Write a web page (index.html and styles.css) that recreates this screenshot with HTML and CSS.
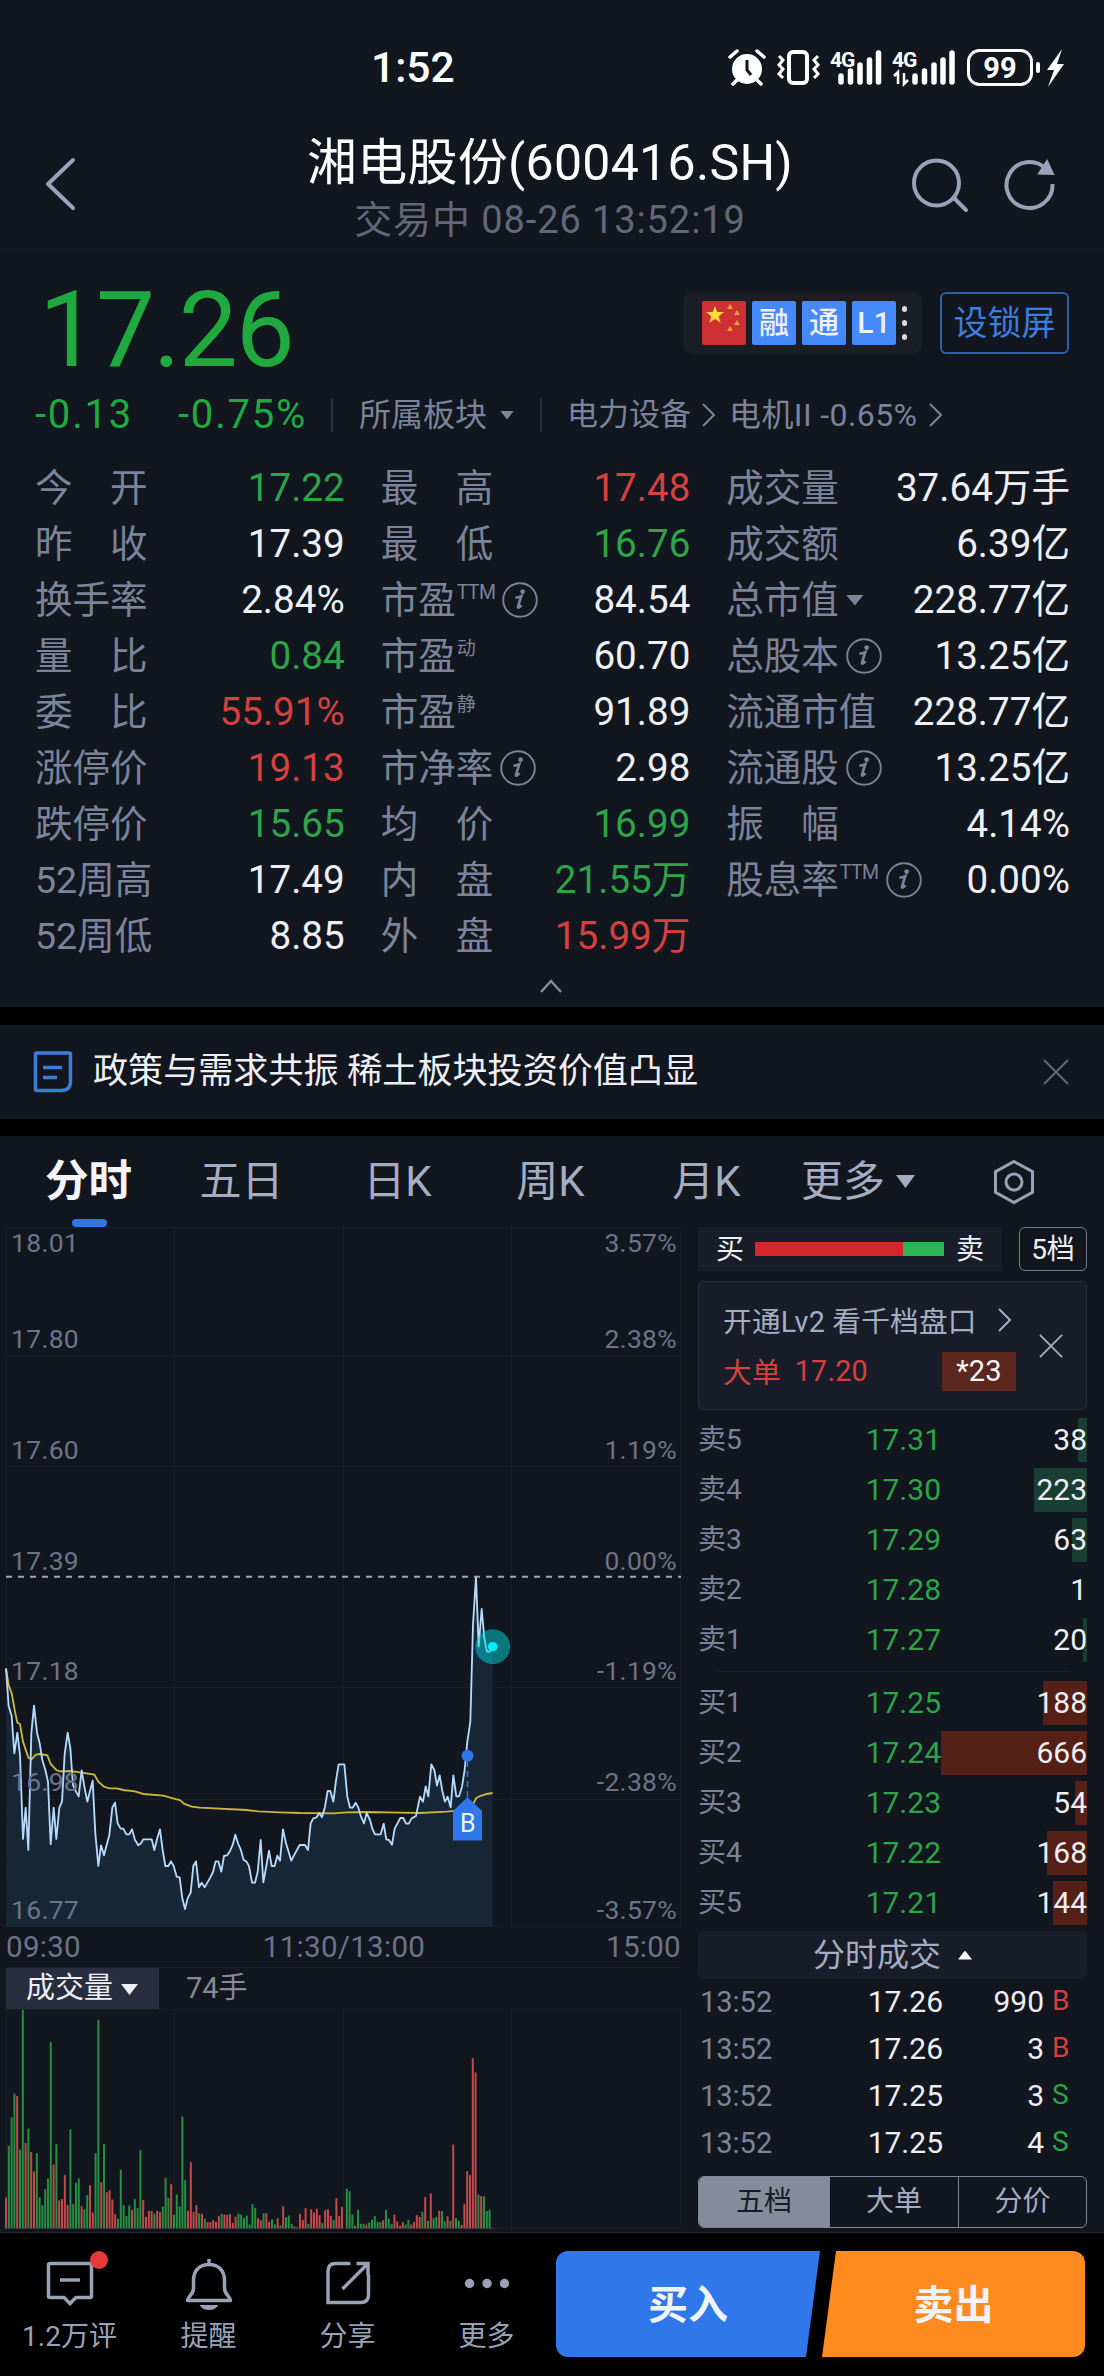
FILE: index.html
```html
<!DOCTYPE html>
<html lang="zh-CN">
<head>
    <meta charset="UTF-8">
    <meta name="viewport" content="width=device-width, initial-scale=1.0">
    <title>湘电股份(600416.SH)</title>
    <link rel="stylesheet" href="styles.css">
</head>
<body>
    <svg class="defs" width="0" height="0">
        <symbol id="info" viewBox="0 0 36 36">
            <circle cx="18" cy="18" r="16.8" fill="none" stroke="currentColor" stroke-width="1.9"/>
            <circle cx="20.6" cy="9.7" r="2.4" fill="currentColor"/>
            <path d="M13.500 15.800c2.200-.3 4-.8 5.800-1.600l-3.300 10.400c-.4 1.700.9 1.300 3.600-1.400" fill="none" stroke="currentColor" stroke-width="2.600"/>
        </symbol>
        <symbol id="chevron" viewBox="0 0 13 24">
            <path d="M1 1l11 11L1 23" fill="none" stroke="currentColor" stroke-width="2"/>
        </symbol>
        <symbol id="close" viewBox="0 0 26 26">
            <path d="M1 1l24 24M25 1L1 25" fill="none" stroke="currentColor" stroke-width="2"/>
        </symbol>
    </svg>

    <!-- Status bar -->
    <div class="status-bar">
        <div class="clock">1:52</div>
        <svg class="status-icons" width="340" height="60" viewBox="726 38 340 60" fill="#fff">
            <circle cx="746" cy="69" r="15"/>
            <path d="M729 57l7-6M763 57l-7-6M736 80l-4 4M756 80l4 4" stroke="#fff" stroke-width="3.500" stroke-linecap="round"/>
            <path d="M746 60v10l4 5" fill="none" stroke="#12161f" stroke-width="3"/>
            <rect x="788" y="52" width="18" height="31" rx="4" fill="none" stroke="#fff" stroke-width="4"/>
            <path d="M778 56l4 4-4 5 4 4-4 5 4 4M817 56l-4 4 4 5-4 4 4 5-4 4" fill="none" stroke="#fff" stroke-width="3"/>
            <text x="829" y="67" class="net">4G</text>
            <path d="M840 76v6M849.500 71v11M859 65v17M868.500 60v22M877.500 53v29" stroke="#fff" stroke-width="5.500" stroke-linecap="round"/>
            <text x="891" y="67" class="net">4G</text>
            <path d="M897 84v-12l-4 4M903 73v11l4-4" fill="none" stroke="#fff" stroke-width="2.500"/>
            <path d="M914 76v6M923.500 71v11M933 65v17M942 60v22M951 53v29" stroke="#fff" stroke-width="5.500" stroke-linecap="round"/>
            <rect x="967.500" y="50.500" width="63" height="34" rx="11" fill="none" stroke="#fff" stroke-width="3"/>
            <text x="999" y="78" class="battery">99</text>
            <rect x="1035" y="62" width="4" height="11" rx="2"/>
            <path d="M1061 49l-15 21h7l-6 17 16-23h-7z"/>
        </svg>
    </div>

    <!-- Title -->
    <header class="header">
        <svg class="back" width="32" height="54" viewBox="0 0 32 54">
            <path d="M29 3L4 27l25 24" fill="none" stroke="#99a2b8" stroke-width="4" stroke-linecap="round" stroke-linejoin="round"/>
        </svg>
        <div class="title">
            <h1>湘电股份(600416.SH)</h1>
            <p>交易中 08-26 13:52:19</p>
        </div>
        <svg width="146" height="56" viewBox="909 157 146 56" fill="none" stroke="#99a2b8" stroke-width="4">
            <circle cx="935.500" cy="183" r="22.500"/>
            <path d="M953 198l12 12" stroke-linecap="round"/>
            <path d="M1045 169a23 23 0 1 0 6.500 15"/>
            <path d="M1046 161l6 13-14-.5z" fill="#99a2b8" stroke-width="2"/>
        </svg>
    </header>

    <!-- Quote -->
    <section class="quote">
        <div class="price-row">
            <div class="price">17.26</div>
            <div class="badges">
                <svg width="44" height="44" viewBox="0 0 44 44">
                    <rect width="44" height="44" rx="2" fill="#cf3034"/>
                    <path d="M13 5l2.300 6H22l-5.300 4.200 2 6.600L13 18l-5.700 3.800 2-6.600L4 11h6.700z" fill="#fddb35"/>
                    <path d="M28 3l3 5h-6zM35 9l3 5h-6zM35 19l3 5h-6zM28 25l3 5h-6z" fill="#f0a23a"/>
                </svg>
                <span class="badge">融</span>
                <span class="badge">通</span>
                <span class="badge">L1</span>
                <span class="dots"><i></i><i></i><i></i></span>
            </div>
            <button class="lock-btn">设锁屏</button>
        </div>
        <div class="change-row">
            <span class="change green">-0.13</span>
            <span class="change percent green">-0.75%</span>
            <span class="bar"></span>
            <span class="board">所属板块</span>
            <span class="tri"></span>
            <span class="bar second"></span>
            <span class="industry">电力设备</span>
            <svg class="arrow" width="13" height="24"><use href="#chevron"/></svg>
            <span class="machine">电机II -0.65%</span>
            <svg class="arrow" width="13" height="24"><use href="#chevron"/></svg>
        </div>

        <div class="stats">
            <dl>
                <div><dt>今　开</dt><dd class="green">17.22</dd></div>
                <div><dt>昨　收</dt><dd>17.39</dd></div>
                <div><dt>换手率</dt><dd>2.84%</dd></div>
                <div><dt>量　比</dt><dd class="green">0.84</dd></div>
                <div><dt>委　比</dt><dd class="red">55.91%</dd></div>
                <div><dt>涨停价</dt><dd class="red">19.13</dd></div>
                <div><dt>跌停价</dt><dd class="green">15.65</dd></div>
                <div><dt>52周高</dt><dd>17.49</dd></div>
                <div><dt>52周低</dt><dd>8.85</dd></div>
            </dl>
            <dl>
                <div><dt>最　高</dt><dd class="red">17.48</dd></div>
                <div><dt>最　低</dt><dd class="green">16.76</dd></div>
                <div><dt>市盈<sup class="ttm">TTM</sup><svg class="info"><use href="#info"/></svg></dt><dd>84.54</dd></div>
                <div><dt>市盈<sup>动</sup></dt><dd>60.70</dd></div>
                <div><dt>市盈<sup>静</sup></dt><dd>91.89</dd></div>
                <div><dt>市净率<svg class="info"><use href="#info"/></svg></dt><dd>2.98</dd></div>
                <div><dt>均　价</dt><dd class="green">16.99</dd></div>
                <div><dt>内　盘</dt><dd class="green">21.55万</dd></div>
                <div><dt>外　盘</dt><dd class="red">15.99万</dd></div>
            </dl>
            <dl>
                <div><dt>成交量</dt><dd>37.64万手</dd></div>
                <div><dt>成交额</dt><dd>6.39亿</dd></div>
                <div><dt>总市值<span class="tri big"></span></dt><dd>228.77亿</dd></div>
                <div><dt>总股本<svg class="info"><use href="#info"/></svg></dt><dd>13.25亿</dd></div>
                <div><dt>流通市值</dt><dd>228.77亿</dd></div>
                <div><dt>流通股<svg class="info"><use href="#info"/></svg></dt><dd>13.25亿</dd></div>
                <div><dt>振　幅</dt><dd>4.14%</dd></div>
                <div><dt>股息率<sup class="ttm">TTM</sup><svg class="info"><use href="#info"/></svg></dt><dd>0.00%</dd></div>
            </dl>
        </div>
        <svg class="collapse" width="24" height="16" viewBox="0 0 24 16">
            <path d="M2 14L12 3l10 11" fill="none" stroke="#858c9d" stroke-width="2.500"/>
        </svg>
    </section>

    <!-- News -->
    <section class="news">
        <svg width="40" height="44" viewBox="0 0 40 44" fill="none" stroke="#3f7ddb" stroke-width="3.500">
            <path d="M4 3h32a1.500 1.500 0 0 1 1.500 1.500V31c0 6-3 9.500-9 9.500H4A1.500 1.500 0 0 1 2.500 39V4.500A1.500 1.500 0 0 1 4 3z"/>
            <path d="M10 17.500h19M10 27.500h14"/>
        </svg>
        <p>政策与需求共振 稀土板块投资价值凸显</p>
        <svg class="close" width="26" height="26"><use href="#close"/></svg>
    </section>

    <!-- Chart area -->
    <section class="market">
        <nav class="tabs">
            <a class="active">分时</a>
            <a>五日</a>
            <a>日K</a>
            <a>周K</a>
            <a>月K</a>
            <a>更多<span class="tri big"></span></a>
            <svg width="44" height="46" viewBox="0 0 44 46" fill="none" stroke="#99a2b8" stroke-width="3">
                <path d="M22 2.500l18.500 10.200v20.600L22 43.500 3.500 33.300V12.700z"/>
                <circle cx="22" cy="23" r="8"/>
            </svg>
        </nav>

        <div class="columns">
            <div class="chart">
                <svg width="690" height="738" viewBox="0 0 690 738">
                    <path class="grid" d="M6 .5h675M6 128.500h675M6 239.500h675M6 460.500h675M6 572.500h675M6 699.500h675M6.500 0v700M174.500 0v700M343.500 0v700M511.500 0v700M680.500 0v700"/>
                    <g transform="translate(0 333) scale(.33333)">
                        <path id="area" fill="#182736"/>
                        <path id="average" class="average"/>
                        <path id="line" class="line"/>
                    </g>
                    <path class="base" d="M6 349.700h675"/>
                    <g class="axis">
                        <text x="11" y="25">18.01</text>
                        <text x="11" y="120.500">17.80</text>
                        <text x="11" y="231.500">17.60</text>
                        <text x="11" y="342.500">17.39</text>
                        <text x="11" y="453">17.18</text>
                        <text x="11" y="564">16.98</text>
                        <text x="11" y="692">16.77</text>
                    </g>
                    <g class="axis end">
                        <text x="677" y="25">3.57%</text>
                        <text x="677" y="120.500">2.38%</text>
                        <text x="677" y="231.500">1.19%</text>
                        <text x="677" y="342.500">0.00%</text>
                        <text x="677" y="453">-1.19%</text>
                        <text x="677" y="564">-2.38%</text>
                        <text x="677" y="692">-3.57%</text>
                    </g>
                    <circle cx="492.700" cy="419.700" r="17.500" fill="#00d5dc" fill-opacity=".5"/>
                    <circle cx="492.700" cy="419.700" r="4.800" fill="#09eaff"/>
                    <path d="M467.500 534v36" stroke="#2f77ea" stroke-width="1.500" stroke-dasharray="6 4"/>
                    <circle cx="467.500" cy="528.700" r="6" fill="#2f77ea"/>
                    <path d="M467.500 570l14.500 14v29.500h-29V584z" fill="#2f77ea"/>
                    <text x="467.800" y="605" class="mark">B</text>
                    <g class="time">
                        <text x="6" y="729.500">09:30</text>
                        <text x="344" y="729.500" text-anchor="middle">11:30/13:00</text>
                        <text x="681" y="729.500" text-anchor="end">15:00</text>
                    </g>
                </svg>
                <div class="volume-head">
                    <span class="select">成交量<span class="tri"></span></span>
                    <span class="hands">74手</span>
                </div>
                <svg width="690" height="220" viewBox="0 0 690 220">
                    <path class="grid" d="M6 .5h675M6 219.500h675M6.500 0v220M174.500 0v220M343.500 0v220M511.500 0v220M680.500 0v220"/>
                    <g id="volume"></g>
                </svg>
            </div>

            <div class="depth">
                <div class="ratio-row">
                    <div class="ratio">买<span class="ratio-bar"><i></i></span>卖</div>
                    <span class="level">5档</span>
                </div>
                <div class="lv2">
                    <div class="lv2-body">
                        <p>开通Lv2 看千档盘口<svg width="13" height="24"><use href="#chevron"/></svg></p>
                        <p class="red"><span>大单</span><span class="big-price">17.20</span><b>*23</b></p>
                    </div>
                    <svg width="24" height="24"><use href="#close" width="24" height="24"/></svg>
                </div>
                <ul class="orders sell">
                    <li><span>卖5</span><em>17.31</em><b><i style="width: 9px"></i>38</b></li>
                    <li><span>卖4</span><em>17.30</em><b><i style="width: 53px"></i>223</b></li>
                    <li><span>卖3</span><em>17.29</em><b><i style="width: 15px"></i>63</b></li>
                    <li><span>卖2</span><em>17.28</em><b>1</b></li>
                    <li><span>卖1</span><em>17.27</em><b><i style="width: 4px"></i>20</b></li>
                </ul>
                <hr>
                <ul class="orders buy">
                    <li><span>买1</span><em>17.25</em><b><i style="width: 44px"></i>188</b></li>
                    <li><span>买2</span><em>17.24</em><b><i style="width: 146px"></i>666</b></li>
                    <li><span>买3</span><em>17.23</em><b><i style="width: 12px"></i>54</b></li>
                    <li><span>买4</span><em>17.22</em><b><i style="width: 40px"></i>168</b></li>
                    <li><span>买5</span><em>17.21</em><b><i style="width: 34px"></i>144</b></li>
                </ul>
                <div class="deals-head">分时成交<span class="tri up"></span></div>
                <ul class="deals">
                    <li><span>13:52</span><em>17.26</em><b>990</b><i class="red">B</i></li>
                    <li><span>13:52</span><em>17.26</em><b>3</b><i class="red">B</i></li>
                    <li><span>13:52</span><em>17.25</em><b>3</b><i class="green">S</i></li>
                    <li><span>13:52</span><em>17.25</em><b>4</b><i class="green">S</i></li>
                </ul>
                <div class="segments">
                    <span class="on">五档</span>
                    <span>大单</span>
                    <span>分价</span>
                </div>
            </div>
        </div>
    </section>

    <!-- Bottom bar -->
    <footer class="toolbar">
        <a>
            <svg width="62" height="60" viewBox="39 2250 62 60" fill="none" stroke="#99a2b5" stroke-width="3.500">
                <path d="M50 2263.500h40a1.500 1.500 0 0 1 1.500 1.500v31a1.500 1.500 0 0 1-1.500 1.500H76l-6 6-6-6H50a1.500 1.500 0 0 1-1.500-1.500v-31a1.500 1.500 0 0 1 1.500-1.500z"/>
                <path d="M60 2280h20"/>
                <circle cx="99" cy="2260" r="9" fill="#e63a38" stroke="none"/>
            </svg>
            <span>1.2万评</span>
        </a>
        <a>
            <svg width="62" height="60" viewBox="177.500 2250 62 60" fill="none" stroke="#99a2b5" stroke-width="3.500" stroke-linejoin="round">
                <path d="M208.500 2259v6M187 2300.500c0-4 6-6 6-12v-8c0-10 6-16 15.500-16s15.500 6 15.500 16v8c0 6 6 8 6 12z"/>
                <path d="M199 2305h19q-3 5-9.500 5t-9.500-5z" fill="#99a2b5" stroke="none"/>
            </svg>
            <span>提醒</span>
        </a>
        <a>
            <svg width="62" height="60" viewBox="316.500 2250 62 60" fill="none" stroke="#99a2b5" stroke-width="3.500">
                <path d="M350 2263.500h-15q-7.500 0-7.500 8v31h33q7.500 0 7.500-8v-20M356 2263.500h11.500v11.500M367 2264l-25 25"/>
            </svg>
            <span>分享</span>
        </a>
        <a>
            <svg width="62" height="60" viewBox="455 2250 62 60" fill="#99a2b5">
                <circle cx="468.500" cy="2283.500" r="4.700"/><circle cx="486" cy="2283.500" r="4.700"/><circle cx="503.500" cy="2283.500" r="4.700"/>
            </svg>
            <span>更多</span>
        </a>
        <div class="trade">
            <button class="buy-btn">买入</button>
            <button class="sell-btn">卖出</button>
        </div>
    </footer>

    <script src="chart.js"></script>
</body>
</html>
```

FILE: styles.css
```css
* {
    margin: 0;
    padding: 0;
    box-sizing: border-box;
}

body {
    width: 1104px;
    height: 2376px;
    overflow: hidden;
    background-color: #000;
    color: #eef0f5;
    font-family: Roboto, "Noto Sans CJK SC", sans-serif;
}

svg {
    display: block;
    flex-shrink: 0;
}

.defs {
    position: absolute;
}

ul {
    list-style: none;
}

em, i {
    font-style: normal;
}

b {
    font-weight: 400;
}

button {
    font-family: inherit;
    border: none;
}

.green {
    color: #2ea449;
}

.red {
    color: #d5413e;
}

/* Triangles */
.tri {
    display: inline-block;
    width: 14px;
    height: 9px;
    background-color: currentColor;
    clip-path: polygon(0 0, 100% 0, 50% 100%);
}

.tri.big {
    width: 20px;
    height: 13px;
}

.tri.up {
    clip-path: polygon(50% 0, 100% 100%, 0 100%);
}

/* Status bar */
.status-bar {
    display: flex;
    height: 120px;
    padding: 38px 37px 0 371px;
    background-color: #12161f;
    justify-content: space-between;
}

.clock {
    font-size: 42.5px;
    font-weight: 500;
    line-height: 60px;
    color: #fff;
}

.net {
    font-size: 21px;
    font-weight: 700;
    letter-spacing: -1px;
}

.battery {
    font-size: 29px;
    font-weight: 700;
    text-anchor: middle;
}

/* Header */
.header {
    display: flex;
    height: 130px;
    padding: 0 48px 0 44px;
    background-color: #12161f;
    border-bottom: 1px solid #1b1f28;
    justify-content: space-between;
}

.header > svg {
    margin-top: 37px;
}

.back {
    margin-right: 114px;
}

.title {
    text-align: center;
    padding-top: 13px;
}

.title h1 {
    font-size: 50px;
    font-weight: 400;
    line-height: 60px;
    letter-spacing: .3px;
    color: #fff;
}

.title p {
    font-size: 38px;
    line-height: 54px;
    letter-spacing: .9px;
    color: #62687a;
}

/* Quote */
.quote {
    height: 757px;
    background-color: #12161f;
}

.price-row {
    display: flex;
    height: 125px;
    padding: 42px 35px 0 39px;
}

.price {
    flex: 1;
    font-size: 105px;
    line-height: 77px;
    letter-spacing: -2px;
    color: #1fa93f;
}

.badges {
    display: flex;
    width: 239px;
    height: 62px;
    padding: 0 0 0 19px;
    margin-right: 18px;
    gap: 6px;
    align-items: center;
    background-color: #1b1e25;
    border-radius: 10px;
}

.badge {
    width: 44px;
    height: 44px;
    border-radius: 2px;
    background-color: #4689fb;
    font-size: 30px;
    font-weight: 500;
    line-height: 43px;
    text-align: center;
}

.dots {
    display: flex;
    flex-direction: column;
    gap: 8px;
}

.dots i {
    width: 5px;
    height: 6px;
    border-radius: 3px;
    background-color: #d8dadf;
}

.lock-btn {
    width: 129px;
    height: 62px;
    border: 2px solid #305fa8;
    border-radius: 6px;
    background: none;
    font-size: 34px;
    line-height: 56px;
    color: #3d7ddd;
}

.change-row {
    display: flex;
    height: 80px;
    padding-left: 35px;
    align-items: center;
    font-size: 32px;
    line-height: 78px;
    white-space: nowrap;
    color: #7b849a;
}

.change {
    width: 143px;
    font-size: 40px;
    line-height: 80px;
    letter-spacing: 1.8px;
    color: #1fa93f;
}

.percent {
    width: 153px;
}

.bar {
    width: 2px;
    height: 34px;
    background-color: #2a2f3a;
}

.board {
    margin-left: 26px;
}

.change-row .tri {
    margin-left: 13px;
}

.second {
    margin: 0 25px 0 26px;
}

.industry {
    width: 124px;
    font-size: 31px;
}

.machine {
    width: 191px;
    margin-left: 14px;
    letter-spacing: .4px;
}

.machine + .arrow {
    margin-left: 9px;
}

.industry + .arrow {
    margin-left: 11px;
}

.stats {
    display: flex;
    padding: 5px 34px 0 35px;
    gap: 36px;
}

.stats dl {
    width: 310px;
}

.stats dl:last-child {
    width: 344px;
}

.stats dl > div {
    display: flex;
    height: 56px;
    align-items: center;
    justify-content: space-between;
    white-space: nowrap;
}

dt {
    display: flex;
    align-items: center;
    font-size: 37.5px;
    line-height: 56px;
    color: #7b849a;
}

dd {
    font-size: 38.6px;
    line-height: 56px;
}

sup {
    font-size: 19px;
    line-height: 20px;
    margin: 0 0 14px 1px;
}

.ttm {
    font-size: 19.5px;
    letter-spacing: -.6px;
}

.info {
    width: 36px;
    height: 36px;
    margin-left: 7px;
}

dt .tri.big {
    width: 18px;
    height: 11px;
    margin-left: 7px;
}

.collapse {
    margin: 14px auto 0 539px;
}

/* News */
.news {
    display: flex;
    height: 94px;
    margin: 18px 0 17px;
    padding: 0 35px 0 33px;
    align-items: center;
    background-color: #12161f;
}

.news p {
    flex: 1;
    margin-left: 20px;
    font-size: 35.1px;
    line-height: 94px;
    padding-bottom: 2px;
}

.close {
    color: #5d657a;
}

/* Tabs */
.market {
    height: 1097px;
    background-color: #12161f;
    border-bottom: 1px solid #242832;
}

.tabs {
    display: grid;
    grid-template-columns: 177px 129px 183px 123px 189px 114px 123px;
    height: 91px;
    align-items: center;
    font-size: 42px;
    color: #a5adc2;
}

.tabs a {
    display: flex;
    position: relative;
    height: 91px;
    line-height: 92px;
    align-items: center;
    justify-content: center;
    white-space: nowrap;
}

.tabs .active {
    font-size: 43.5px;
    font-weight: 700;
    color: #f3f5f9;
}

.tabs .active::after {
    content: "";
    position: absolute;
    left: 72px;
    bottom: 0;
    width: 35px;
    height: 8px;
    border-radius: 4px;
    background-color: #3277e6;
}

.tabs .tri {
    margin-left: 11px;
}

.tabs svg {
    margin-left: 77px;
}

.columns {
    display: flex;
    gap: 8px;
}

/* Chart */
.grid {
    fill: none;
    stroke: #1a1e27;
    stroke-width: 1;
}

.line {
    fill: none;
    stroke: #b5dafc;
    stroke-width: 5.5;
    stroke-linejoin: round;
}

.average {
    fill: none;
    stroke: #c9b63c;
    stroke-width: 5.5;
}

.base {
    stroke: #a2a6b4;
    stroke-width: 2;
    stroke-dasharray: 6 6;
}

.axis {
    font-size: 26.5px;
    letter-spacing: .3px;
    fill: #6d748a;
}

.end {
    text-anchor: end;
}

.mark {
    font-size: 25px;
    fill: #f0f5ff;
    text-anchor: middle;
}

.time {
    font-size: 29.5px;
    letter-spacing: .3px;
    fill: #6d748a;
}

.volume-head {
    display: flex;
    height: 42px;
    width: 675px;
    margin: 2px 0 0 6px;
    border-top: 1px solid #1a1e27;
    font-size: 29px;
    line-height: 41px;
}

.select {
    width: 153px;
    padding-left: 20px;
    background-color: #282e40;
}

.select .tri {
    width: 17px;
    height: 11px;
    margin: 0 0 3px 8px;
}

.hands {
    margin-left: 27px;
    color: #868a94;
}

/* Depth */
.depth {
    width: 389px;
}

.ratio-row {
    display: flex;
    justify-content: space-between;
    font-size: 28px;
    line-height: 43px;
}

.ratio {
    display: flex;
    width: 304px;
    height: 44px;
    padding-left: 18px;
    align-items: center;
    background-color: #181d29;
}

.ratio-bar {
    width: 189px;
    height: 14px;
    margin: 0 12px 0 11px;
    background-color: #2eb656;
}

.ratio-bar i {
    display: block;
    width: 148px;
    height: 14px;
    background-color: #d42727;
}

.level {
    width: 68px;
    height: 44px;
    border: 1px solid #737b8e;
    border-radius: 6px;
    text-align: center;
}

.lv2 {
    display: flex;
    height: 129px;
    margin: 10px 0 8px;
    padding: 12px 23px 0 24px;
    border: 1px solid #282e3e;
    border-radius: 5px;
    background-color: #181d29;
    color: #a5adc2;
}

.lv2-body {
    width: 293px;
    margin-right: 23px;
}

.lv2 > svg {
    margin-top: 40px;
}

.lv2 p {
    display: flex;
    height: 51px;
    align-items: center;
    font-size: 28.7px;
    letter-spacing: .2px;
    white-space: nowrap;
}

.lv2 p svg {
    margin-left: 21px;
}

.lv2 .red {
    color: #d5413e;
}

.big-price {
    margin-left: 14px;
}

.lv2 b {
    width: 74px;
    height: 39px;
    margin: 2px 0 0 auto;
    background-color: #5b271f;
    font-size: 29px;
    line-height: 39px;
    text-align: center;
    color: #f3f5f9;
}

.orders li {
    display: flex;
    height: 44px;
    margin-bottom: 6px;
    line-height: 44px;
    font-size: 30px;
}

.orders span {
    width: 122px;
    font-size: 28px;
    color: #7b849a;
}

.orders em {
    width: 121px;
    text-align: right;
    color: #2ea449;
}

.orders b {
    position: relative;
    z-index: 0;
    flex: 1;
    text-align: right;
}

.orders b i {
    position: absolute;
    z-index: -1;
    top: 0;
    right: 0;
    height: 44px;
}

.sell i {
    background-color: #193f34;
}

.buy i {
    background-color: #552117;
}

hr {
    height: 1px;
    margin: 9px 18px 9px;
    border: none;
    background-color: #1d212b;
}

.deals-head {
    display: flex;
    height: 48px;
    align-items: center;
    justify-content: center;
    gap: 17px;
    border-radius: 5px;
    background-color: #181d29;
    font-size: 32px;
    line-height: 46px;
    color: #a5adc2;
}

.deals-head .tri {
    color: #fff;
}

.deals li {
    display: flex;
    height: 47px;
    line-height: 46px;
    font-size: 30px;
}

.deals span {
    width: 123px;
    padding-left: 2px;
    font-size: 29px;
    color: #7b849a;
}

.deals em {
    width: 122px;
    text-align: right;
}

.deals b {
    width: 101px;
    text-align: right;
}

.deals i {
    margin-left: 8px;
    font-size: 28px;
    line-height: 43px;
}

.segments {
    display: grid;
    grid-template-columns: 130px 129px 1fr;
    height: 52px;
    margin-top: 9px;
    border: 1px solid #7f8698;
    border-radius: 6px;
    overflow: hidden;
    font-size: 28px;
    line-height: 50px;
    text-align: center;
    color: #a5adc2;
}

.segments span + span {
    border-left: 1px solid #7f8698;
}

.segments .on {
    background-color: #868c9c;
    color: #181c26;
}

/* Bottom bar */
.toolbar {
    display: flex;
    padding-top: 17px;
}

.toolbar a {
    display: flex;
    width: 139px;
    flex-direction: column;
    align-items: center;
    font-size: 28px;
    line-height: 53px;
    color: #99a2b5;
    white-space: nowrap;
}

.toolbar a svg {
    overflow: visible;
}

.trade {
    display: flex;
    margin-top: 1px;
}

.trade button {
    height: 106px;
    padding-bottom: 5px;
    font-size: 40px;
    font-weight: 700;
    color: #f0f3fa;
}

.buy-btn {
    width: 264px;
    border-radius: 12px 0 0 12px;
    background-color: #3078ea;
    clip-path: polygon(0 0, 100% 0, 250px 100%, 0 100%);
}

.sell-btn {
    width: 263px;
    margin-left: 2px;
    border-radius: 0 12px 12px 0;
    background-color: #ff8a1f;
    clip-path: polygon(14px 0, 100% 0, 100% 100%, 0 100%);
}
```

FILE: chart.js
```js
// Intraday price, x y pairs
const price = '18,325 26,438 35,468 43,580 52,518 60,585 69,837 77,743 85,870 94,520 102,437 111,518 119,550 127,600 136,630 144,665 152,853 161,743 169,837 178,743 186,725 194,582 203,518 211,565 219,675 228,695 236,709 245,631 253,680 262,725 270,693 278,662 286,820 295,918 303,856 312,886 320,855 328,825 337,743 345,728 353,790 362,806 370,806 379,823 388,823 396,808 405,840 415,856 423,850 430,838 455,838 463,870 471,838 480,808 488,870 496,918 505,918 513,904 521,918 530,950 539,952 547,1015 555,1047 563,1015 572,998 580,918 588,904 597,982 605,968 614,982 622,968 631,952 639,936 647,904 655,904 664,935 672,888 681,886 689,875 698,855 706,824 714,850 722,868 731,900 739,904 747,918 756,968 765,968 773,936 782,840 790,967 799,918 807,872 815,918 824,918 832,887 840,902 849,808 858,850 874,902 882,886 899,855 915,855 924,870 932,790 940,775 950,772 958,759 966,772 975,740 983,693 991,693 1000,725 1008,662 1016,613 1033,613 1042,710 1050,743 1058,743 1067,728 1075,743 1083,770 1092,790 1100,759 1110,780 1117,806 1125,823 1142,823 1151,791 1159,838 1167,840 1176,854 1184,806 1201,774 1210,774 1218,791 1226,791 1235,775 1248,768 1260,710 1269,725 1277,679 1285,709 1294,613 1303,630 1311,677 1319,646 1327,693 1335,725 1343,710 1352,742 1360,646 1369,709 1377,709 1386,680 1394,630 1402,545 1411,485 1419,195 1428,50 1436,260 1445,147 1453,235 1461,275 1469,275 1478,260';

const average = '18,325 26,375 35,400 43,445 52,488 60,492 69,545 85,593 94,598 108,584 119,582 142,586 152,612 169,630 178,634 210,633 245,638 283,644 295,665 312,680 328,685 350,685 370,690 405,694 430,702 490,707 530,718 540,720 552,731 575,740 600,743 740,750 775,754 840,757 900,759 1000,760 1042,757 1100,756 1200,758 1260,759 1340,755 1375,752 1402,740 1422,728 1428,715 1440,708 1460,702 1478,699';

// Volume per minute, r = up, g = down
const volume = 'r93 g248 g333 g405 r397 g237 g656 r256 g300 r229 r171 g226 g94 g70 g119 g149 g559 r192 g253 r84 r88 r160 r70 g298 g73 g137 g150 r67 g58 g100 r130 r48 g226 g626 r139 g253 r109 r115 r87 r43 g29 g176 g70 g38 g69 r56 g88 g61 g235 r85 r35 r53 r53 g45 r53 r49 g65 g151 g92 r133 g41 g102 g66 g336 g145 r53 r199 r50 r70 g46 r44 g30 r19 r19 r25 r20 r38 g44 r42 r41 r43 r17 r35 g45 g42 g31 g39 g12 g73 g62 r31 r25 g46 r46 r20 g28 g12 r31 g9 r67 g34 g39 g14 r6 r3 r44 r26 r61 g14 r58 r48 r60 r40 g16 r55 r58 r38 g26 r91 r38 r65 g119 g112 g42 r8 g56 g14 g14 r12 g18 g26 g37 g19 g20 r25 g56 g29 g13 r41 r21 r8 r19 g12 g26 r12 r20 r40 r35 g50 r94 g23 r105 g31 g35 r53 g52 g21 r37 g23 r252 g31 g23 r11 r73 r172 r160 r511 r468 g102 r97 g97 g52 g56 r2';

document.getElementById('line').setAttribute('d', 'M' + price.split(' ').join('L'));
document.getElementById('average').setAttribute('d', 'M' + average.split(' ').join('L'));
document.getElementById('area').setAttribute('d', 'M18,1100L' + price.split(' ').join('L') + 'L1478,1100z');

const group = document.getElementById('volume');
volume.split(' ').forEach((item, i) => {
    const height = Number(item.slice(1)) / 3;
    const bar = document.createElementNS('http://www.w3.org/2000/svg', 'rect');
    // the afternoon session starts after a small gap
    bar.setAttribute('x', 5 + i * 2.8 + (i > 120 ? 2 : 0));
    bar.setAttribute('y', 219.5 - height);
    bar.setAttribute('width', 2);
    bar.setAttribute('height', height);
    bar.setAttribute('fill', item[0] === 'r' ? '#c4494a' : '#268f41');
    group.appendChild(bar);
});
```
